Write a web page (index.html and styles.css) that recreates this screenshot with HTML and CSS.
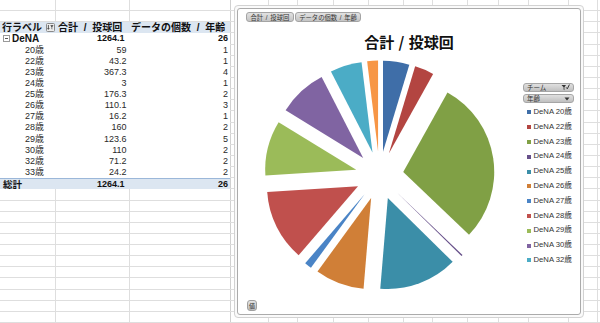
FILE: index.html
```html
<!DOCTYPE html>
<html lang="ja">
<head>
<meta charset="utf-8">
<title>ピボット</title>
<link rel="stylesheet" href="styles.css">
</head>
<body>
<div class="sheet">
  <div class="pivot-col">
    <div class="blank-rows"></div>
    <div class="pivot">
      <div class="row head">
        <div class="c1 head-label"><span>行ラベル</span>
          <svg class="filter-btn" width="9" height="9" viewBox="0 0 9 9"><rect x="0.5" y="0.5" width="8" height="8" rx="1" fill="#ececec" stroke="#8a8a8a"/><path d="M2.4 2v4.2M1.5 5.2l.9 1.1.9-1.1" stroke="#333" stroke-width=".8" fill="none"/><path d="M4.3 2.2h3.2l-1.3 1.7v2.5l-.6-.4V3.9z" fill="#333"/></svg>
        </div>
        <div class="c2">合計 / 投球回</div>
        <div class="c3">データの個数 / 年齢</div>
      </div>
      <div class="row group">
        <div class="c1"><span class="collapse"></span>DeNA</div>
        <div class="c2 num">1264.1</div>
        <div class="c3 num">26</div>
      </div>
      <div class="row item"><div class="c1">20歳</div><div class="c2 num">59</div><div class="c3 num">1</div></div>
      <div class="row item"><div class="c1">22歳</div><div class="c2 num">43.2</div><div class="c3 num">1</div></div>
      <div class="row item"><div class="c1">23歳</div><div class="c2 num">367.3</div><div class="c3 num">4</div></div>
      <div class="row item"><div class="c1">24歳</div><div class="c2 num">3</div><div class="c3 num">1</div></div>
      <div class="row item"><div class="c1">25歳</div><div class="c2 num">176.3</div><div class="c3 num">2</div></div>
      <div class="row item"><div class="c1">26歳</div><div class="c2 num">110.1</div><div class="c3 num">3</div></div>
      <div class="row item"><div class="c1">27歳</div><div class="c2 num">16.2</div><div class="c3 num">1</div></div>
      <div class="row item"><div class="c1">28歳</div><div class="c2 num">160</div><div class="c3 num">2</div></div>
      <div class="row item"><div class="c1">29歳</div><div class="c2 num">123.6</div><div class="c3 num">5</div></div>
      <div class="row item"><div class="c1">30歳</div><div class="c2 num">110</div><div class="c3 num">2</div></div>
      <div class="row item"><div class="c1">32歳</div><div class="c2 num">71.2</div><div class="c3 num">2</div></div>
      <div class="row item"><div class="c1">33歳</div><div class="c2 num">24.2</div><div class="c3 num">2</div></div>
      <div class="row total">
        <div class="c1">総計</div>
        <div class="c2 num">1264.1</div>
        <div class="c3 num">26</div>
      </div>
    </div>
  </div>

  <div class="chart">
    <div class="chart-inner">
      <div class="field-btns">
        <span class="fbtn">合計 / 投球回</span>
        <span class="fbtn">データの個数 / 年齢</span>
      </div>
      <div class="chart-title">合計 / 投球回</div>
      <div class="chart-body">
        <svg class="pie" id="pie" width="280" height="245" viewBox="0 0 280 245"></svg>
        <div class="legend">
          <div class="lbtn"><span>チーム</span>
            <svg width="9" height="7" viewBox="0 0 9 7"><path d="M0.5 1h4.5L3.4 3.2v3l-.8-.6V3.2z" fill="#333"/><path d="M5.2 3.4l1.1 1.4L8.4.6" stroke="#333" stroke-width="1" fill="none"/></svg>
          </div>
          <div class="lbtn"><span>年齢</span>
            <svg width="6" height="4" viewBox="0 0 6 4"><path d="M0.5 0.5h5L3 3.5z" fill="#333"/></svg>
          </div>
          <ul class="legend-items">
            <li><i class="sw s1"></i>DeNA 20歳</li>
            <li><i class="sw s2"></i>DeNA 22歳</li>
            <li><i class="sw s3"></i>DeNA 23歳</li>
            <li><i class="sw s4"></i>DeNA 24歳</li>
            <li><i class="sw s5"></i>DeNA 25歳</li>
            <li><i class="sw s6"></i>DeNA 26歳</li>
            <li><i class="sw s7"></i>DeNA 27歳</li>
            <li><i class="sw s8"></i>DeNA 28歳</li>
            <li><i class="sw s9"></i>DeNA 29歳</li>
            <li><i class="sw s10"></i>DeNA 30歳</li>
            <li><i class="sw s11"></i>DeNA 32歳</li>
          </ul>
        </div>
      </div>
      <div class="value-row"><span class="vbtn">値</span></div>
    </div>
  </div>
</div>
<script src="script.js"></script>
</body>
</html>
```

FILE: styles.css
```css
* { box-sizing: border-box; margin: 0; padding: 0; }

html, body { width: 600px; height: 323px; overflow: hidden; }

body {
  background-color: #fff;
  background-image:
    repeating-linear-gradient(to bottom, transparent 0 10.14px, #dedede 10.14px 11.14px),
    linear-gradient(to right,
      transparent 0 55px, #dedede 55px 56px,
      transparent 56px 129px, #dedede 129px 130px,
      transparent 130px 230px, #d0d0d0 230px 231px,
      transparent 231px 268px, #dedede 268px 269px,
      transparent 269px 297px, #dedede 297px 298px,
      transparent 298px 333px, #dedede 333px 334px,
      transparent 334px 368px, #dedede 368px 369px,
      transparent 369px 403px, #dedede 403px 404px,
      transparent 404px 432px, #dedede 432px 433px,
      transparent 433px 467px, #dedede 467px 468px,
      transparent 468px 498px, #dedede 498px 499px,
      transparent 499px 528px, #dedede 528px 529px,
      transparent 529px 568px, #dedede 568px 569px,
      transparent 569px 597px, #dedede 597px 598px,
      transparent 598px);
  font-family: "Liberation Sans", "Noto Sans CJK JP", sans-serif;
  color: #111;
}

.sheet { display: flex; align-items: flex-start; }

/* ---------- pivot table ---------- */
.pivot-col { width: 231px; flex: none; }
.blank-rows { height: 22.28px; }
.pivot { width: 230px; background: #fff; }

.row {
  display: grid;
  grid-template-columns: 55px 74px 101px;
  height: 11.14px;
  line-height: 11.14px;
  font-size: 9px;
  white-space: nowrap;
}
.row > div { overflow: hidden; }
.num { text-align: right; }
.c2.num { padding-right: 2.5px; }
.c3.num { padding-right: 2px; }

.head {
  background: #dce6f1;
  font-size: 10px;
  font-weight: bold;
  word-spacing: 3px;
}
.head .c1 { padding-left: 2px; }
.head .c2 { padding-left: 3px; }
.head .c3 { padding-left: 2px; }
.head-label { display: flex; align-items: center; justify-content: space-between; }
.filter-btn { display: block; margin-right: 0; }

.group { font-weight: bold; font-size: 9px; }
.group .c1 {
  font-size: 10px;
  padding-left: 3px;
  display: flex;
  align-items: center;
}
.group .c2.num { padding-right: 4.5px; }
.collapse {
  position: relative;
  display: inline-block;
  width: 7px;
  height: 7px;
  border: 1px solid #9a9a9a;
  margin-right: 2px;
  background: #fff;
}
.collapse::after {
  content: "";
  position: absolute;
  left: 1px;
  right: 1px;
  top: 2px;
  height: 1px;
  background: #555;
}

.item .c1 { padding-left: 25px; }
.item { color: #2a2a2a; }

.total {
  background: #dce6f1;
  border-top: 1px solid #9bb7d9;
  font-weight: bold;
}
.total .c1 { padding-left: 3px; font-size: 9.5px; }
.total .c2.num { padding-right: 4.5px; }

/* ---------- chart ---------- */
.chart {
  flex: none;
  margin: 5px 0 0 3px;
  width: 350px;
  height: 313px;
  border: 1px solid #d2d2d2;
  border-radius: 4px;
  padding: 2px;
  background: #fafafa;
}
.chart-inner {
  height: 100%;
  border: 1px solid #ababab;
  border-radius: 3px;
  background: #fff;
  display: flex;
  flex-direction: column;
}

.field-btns {
  display: flex;
  gap: 1px;
  margin: 3px 0 0 8px;
  height: 10px;
}
.fbtn {
  display: block;
  height: 10px;
  line-height: 9px;
  padding: 0 3.5px;
  font-size: 6.3px;
  color: #333;
  word-spacing: 1px;
  background: linear-gradient(#e2e2e2, #c4c4c4);
  border: 1px solid #a4a4a4;
  border-radius: 3px;
  white-space: nowrap;
}

.chart-title {
  margin-top: 10px;
  height: 20px;
  line-height: 20px;
  text-align: center;
  font-family: "Noto Sans CJK JP", sans-serif;
  font-weight: bold;
  font-size: 15px;
  color: #111;
  word-spacing: 1px;
}

.chart-body {
  display: flex;
  height: 245px;
}
.pie { display: block; flex: none; }

.legend {
  width: 51px;
  margin: 31px 0 0 5px;
  flex: none;
}
.lbtn {
  height: 9px;
  margin-bottom: 2px;
  display: flex;
  align-items: center;
  justify-content: space-between;
  padding: 0 3px;
  font-size: 6.5px;
  line-height: 9px;
  color: #333;
  background: linear-gradient(#e0e0e0, #c0c0c0);
  border: 1px solid #a6a6a6;
  border-radius: 3px;
}
.lbtn svg { display: block; }

.legend-items { list-style: none; margin-top: 0.6px; }
.legend-items li {
  height: 14.8px;
  line-height: 14.8px;
  display: flex;
  align-items: center;
  font-size: 7.7px;
  color: #333;
  white-space: nowrap;
}
.sw {
  display: block;
  width: 4px;
  height: 4px;
  margin: 0 2.5px 0 4px;
  flex: none;
}
.s1 { background: #3f6ea8; }
.s2 { background: #b34541; }
.s3 { background: #80a045; }
.s4 { background: #67508a; }
.s5 { background: #3b8ea8; }
.s6 { background: #d07f37; }
.s7 { background: #4a84c6; }
.s8 { background: #c0504d; }
.s9 { background: #9bbb59; }
.s10 { background: #8064a2; }
.s11 { background: #4bacc6; }

.value-row { margin: 3px 0 0 9px; height: 11px; }
.vbtn {
  display: block;
  width: 10px;
  height: 11px;
  line-height: 10px;
  text-align: center;
  font-size: 6px;
  color: #333;
  background: linear-gradient(#e4e4e4, #bdbdbd);
  border: 1px solid #a0a0a0;
  border-radius: 3px;
}
```

FILE: script.js
```js
(function () {
  var data = [59, 43.2, 367.3, 3, 176.3, 110.1, 16.2, 160, 123.6, 110, 71.2, 24.2];
  var colors = ["#3f6ea8", "#b34541", "#80a045", "#67508a", "#3b8ea8", "#d07f37",
                "#4a84c6", "#c0504d", "#9bbb59", "#8064a2", "#4bacc6", "#f79646"];
  var svg = document.getElementById("pie");
  var ns = "http://www.w3.org/2000/svg";
  var total = data.reduce(function (a, b) { return a + b; }, 0);
  var cx = 141.5, cy = 123.5, r = 91, d = 24;
  var a = 0;
  data.forEach(function (v, i) {
    var sweep = v / total * 2 * Math.PI;
    var a0 = a, a1 = a + sweep;
    a = a1;
    var m = (a0 + a1) / 2;
    var ax = cx + d * Math.sin(m), ay = cy - d * Math.cos(m);
    var x0 = ax + r * Math.sin(a0), y0 = ay - r * Math.cos(a0);
    var x1 = ax + r * Math.sin(a1), y1 = ay - r * Math.cos(a1);
    var large = sweep > Math.PI ? 1 : 0;
    var p = document.createElementNS(ns, "path");
    p.setAttribute("d", "M" + ax.toFixed(2) + " " + ay.toFixed(2) +
      "L" + x0.toFixed(2) + " " + y0.toFixed(2) +
      "A" + r + " " + r + " 0 " + large + " 1 " + x1.toFixed(2) + " " + y1.toFixed(2) + "Z");
    p.setAttribute("fill", colors[i]);
    svg.appendChild(p);
  });
})();
```
